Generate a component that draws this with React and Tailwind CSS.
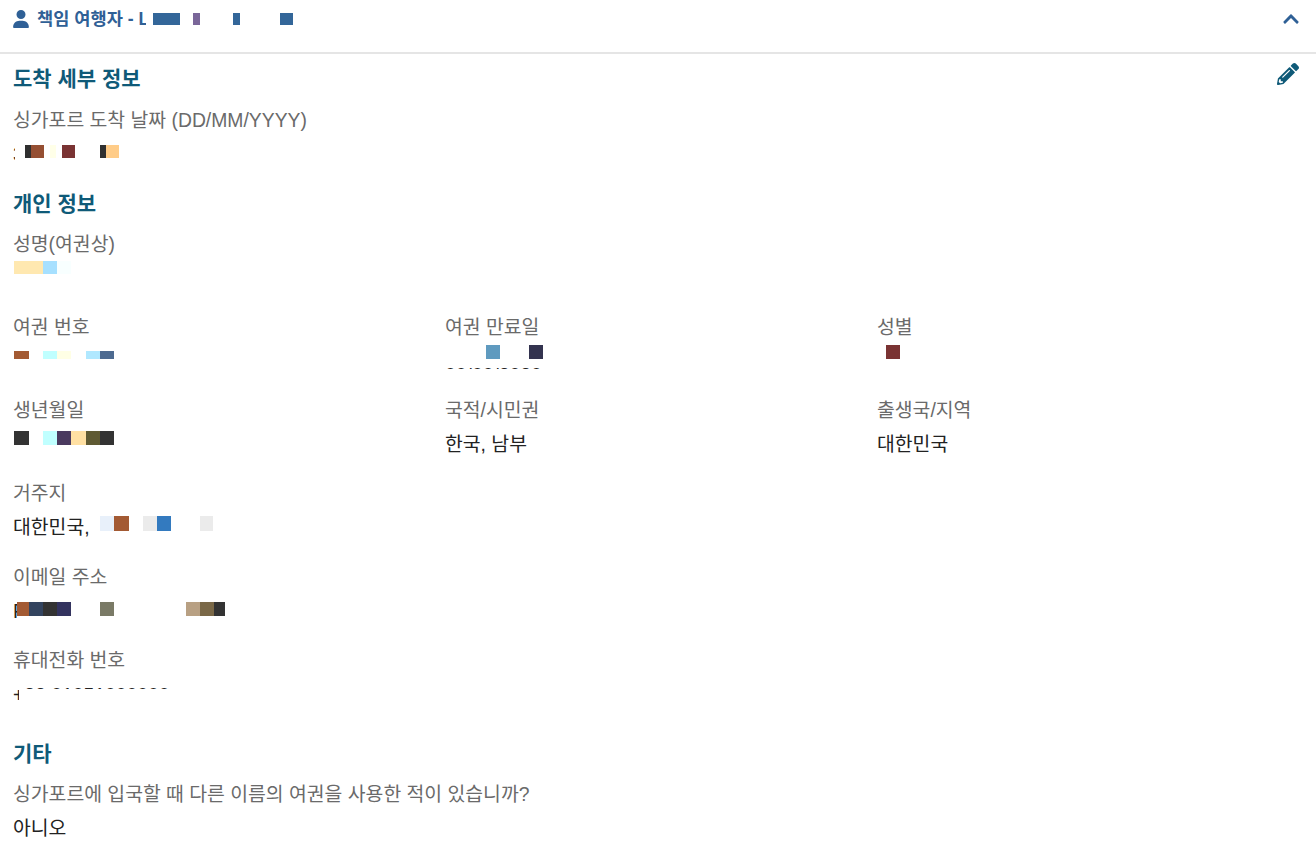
import React from "react";

function Label({ children }) {
  return <div className="text-[19.35px] leading-[24px] text-[#6a6a6a]">{children}</div>;
}

function Heading({ children }) {
  return <h3 className="text-[21px] leading-[26px] font-bold text-[#0f5a78]">{children}</h3>;
}

function Field({ label, children, className = "" }) {
  return (
    <div className={className}>
      <Label>{label}</Label>
      <div className="relative mt-[9px] h-[26px] text-[19.35px] leading-[26px] text-[#222222]">{children}</div>
    </div>
  );
}

function Block({ className }) {
  return <span className={"block h-full shrink-0 " + className}></span>;
}

export default function App() {
  return (
    <div className="min-h-[845px] overflow-hidden bg-white font-['Liberation_Sans','Noto_Sans_CJK_KR',sans-serif]">
      <div className="flex h-[54px] justify-between border-b-2 border-[#e5e5e5] pl-[13px] pr-[17px]">
        <div className="relative flex h-[38px] flex-1 items-center gap-[8px] text-[17.6px] font-bold text-[#2f6096]">
          <svg width="16" height="18" viewBox="0 0 448 512" fill="currentColor">
            <path d="M224 256A128 128 0 1 0 224 0a128 128 0 1 0 0 256zm-45.700 48C79.800 304 0 383.800 0 482.300 0 498.700 13.300 512 29.700 512h388.600c16.400 0 29.700-13.300 29.700-29.700C448 383.800 368.200 304 269.700 304z" />
          </svg>
          <span>책임 여행자 - L</span>
          <div className="absolute left-[133px] top-[13px] flex h-[12px]">
            <Block className="w-[7px] bg-white" />
            <Block className="w-[27px] bg-[#336699]" />
            <Block className="ml-[13px] w-[7px] bg-[#7a6699]" />
            <Block className="ml-[33px] w-[7px] bg-[#336699]" />
            <Block className="ml-[40px] w-[13px] bg-[#336699]" />
          </div>
        </div>
        <svg width="16" height="18" viewBox="0 0 448 512" fill="currentColor" className="mt-[10px] text-[#2f6096]">
          <path d="M240.971 130.524l194.343 194.343c9.373 9.373 9.373 24.569 0 33.941l-22.667 22.667c-9.357 9.357-24.522 9.375-33.901.04L224 227.495 69.255 381.516c-9.379 9.335-24.544 9.317-33.901-.04l-22.667-22.667c-9.373-9.373-9.373-24.569 0-33.941L207.030 130.525c9.372-9.373 24.568-9.373 33.941-.001z" />
        </svg>
      </div>

      <div className="relative pl-[13px]">
        <svg width="22" height="22" viewBox="0 0 512 512" fill="currentColor" className="absolute right-[17px] top-[9px] text-[#0f5a78]">
          <path d="M497.900 142.100l-46.100 46.100c-4.700 4.700-12.300 4.700-17 0l-111-111c-4.700-4.700-4.700-12.300 0-17l46.100-46.100c18.700-18.700 49.100-18.700 67.900 0l60.100 60.100c18.800 18.700 18.800 49.100 0 67.900zM284.200 99.800L21.600 362.400.4 483.900c-2.900 16.400 11.400 30.600 27.800 27.800l121.500-21.300 262.600-262.600c4.700-4.700 4.700-12.300 0-17l-111-111c-4.800-4.700-12.400-4.700-17.100 0zM124.100 339.900c-5.500-5.500-5.500-14.300 0-19.800l154-154c5.500-5.500 14.300-5.500 19.800 0s5.500 14.300 0 19.800l-154 154c-5.500 5.500-14.300 5.500-19.800 0zM88 424h48v36.300l-64.500 11.300-31.100-31.100L51.700 376H88v48z" />
        </svg>
        <div className="pt-[12px]">
          <Heading>도착 세부 정보</Heading>
          <div className="mt-[16px]">
            <Field label="싱가포르 도착 날짜 (DD/MM/YYYY)">
              <span>3</span>
              <div className="absolute left-[2px] top-[-2px] h-[28px] w-[130px] bg-white"></div>
              <div className="absolute left-0 top-[4px] flex h-[13px]">
                <Block className="ml-[12px] w-[6px] bg-[#2f2f2f]" />
                <Block className="w-[13px] bg-[#954f33]" />
                <Block className="ml-[6px] w-[6px] bg-[#ffffe8]" />
                <Block className="ml-[6px] w-[13px] bg-[#7a3333]" />
                <Block className="ml-[25px] w-[6px] bg-[#303030]" />
                <Block className="w-[13px] bg-[#ffcc88]" />
              </div>
            </Field>
          </div>
        </div>

        <div className="mt-[24px]">
          <Heading>개인 정보</Heading>
          <div className="mt-[15px]">
            <Label>성명(여권상)</Label>
            <div className="mt-[5px] flex h-[13px] pl-px">
              <Block className="w-[29px] bg-[#ffe8b0]" />
              <Block className="w-[14px] bg-[#a6e0ff]" />
              <Block className="w-[14px] bg-[#f8ffff]" />
            </div>
          </div>

          <div className="mt-[41px] grid grid-cols-[432px_432px_1fr] gap-y-[24px]">
            <Field label="여권 번호">
              <div className="absolute left-[1px] top-[3px] flex h-[8px]">
                <Block className="w-[15px] bg-[#a35a33]" />
                <Block className="ml-[14px] w-[14px] bg-[#c0ffff]" />
                <Block className="w-[14px] bg-[#ffffe5]" />
                <Block className="ml-[15px] w-[14px] bg-[#b0e8ff]" />
                <Block className="w-[14px] bg-[#4d6a90]" />
              </div>
            </Field>
            <Field label="여권 만료일">
              <span className="block pt-[14px]">00/00/2030</span>
              <div className="absolute left-0 top-[-3px] h-[23px] w-[110px] bg-white"></div>
              <div className="absolute left-0 top-[21px] h-[24px] w-[110px] bg-white"></div>
              <div className="absolute left-0 top-[-3px] flex h-[14px]">
                <Block className="ml-[41px] w-[14px] bg-[#5f9abf]" />
                <Block className="ml-[29px] w-[14px] bg-[#33334f]" />
              </div>
            </Field>
            <Field label="성별">
              <div className="absolute left-[9px] top-[-3px] flex h-[14px]">
                <Block className="w-[14px] bg-[#7a3333]" />
              </div>
            </Field>

            <Field label="생년월일">
              <div className="absolute left-[1px] top-0 flex h-[14px]">
                <Block className="w-[15px] bg-[#333333]" />
                <Block className="ml-[14px] w-[14px] bg-[#c0ffff]" />
                <Block className="w-[14px] bg-[#4a3a5f]" />
                <Block className="w-[15px] bg-[#ffe0a3]" />
                <Block className="w-[14px] bg-[#5f5a33]" />
                <Block className="w-[14px] bg-[#333333]" />
              </div>
            </Field>
            <Field label="국적/시민권">한국, 남부</Field>
            <Field label="출생국/지역">대한민국</Field>
          </div>

          <Field label="거주지" className="mt-[24px]">
            <span>대한민국,</span>
            <div className="absolute left-[87px] top-[2px] flex h-[15px]">
              <Block className="w-[14px] bg-[#e8f0fa]" />
              <Block className="w-[15px] bg-[#a35a33]" />
              <Block className="ml-[14px] w-[14px] bg-[#ebebeb]" />
              <Block className="w-[14px] bg-[#337abf]" />
              <Block className="ml-[29px] w-[13px] bg-[#ebebeb]" />
            </div>
          </Field>

          <Field label="이메일 주소" className="mt-[25px]">
            <span>P</span>
            <div className="absolute left-[4px] top-[-2px] h-[28px] w-[220px] bg-white"></div>
            <div className="absolute left-[4px] top-[4px] flex h-[14px]">
              <Block className="w-[12px] bg-[#a35a33]" />
              <Block className="w-[14px] bg-[#33445f]" />
              <Block className="w-[14px] bg-[#333333]" />
              <Block className="w-[14px] bg-[#33335f]" />
              <Block className="ml-[29px] w-[14px] bg-[#7a7a66]" />
              <Block className="ml-[72px] w-[14px] bg-[#b8a083]" />
              <Block className="w-[14px] bg-[#7a6847]" />
              <Block className="w-[11px] bg-[#333333]" />
            </div>
          </Field>

          <Field label="휴대전화 번호" className="mt-[24px]">
            <span className="block pt-[1px]">+82 01051000000</span>
            <div className="absolute left-[6px] top-[8px] h-[22px] w-[170px] bg-white"></div>
          </Field>
        </div>

        <div className="mt-[34px]">
          <Heading>기타</Heading>
          <div className="mt-[15px]">
            <Field label="싱가포르에 입국할 때 다른 이름의 여권을 사용한 적이 있습니까?">아니오</Field>
          </div>
        </div>
      </div>
    </div>
  );
}
